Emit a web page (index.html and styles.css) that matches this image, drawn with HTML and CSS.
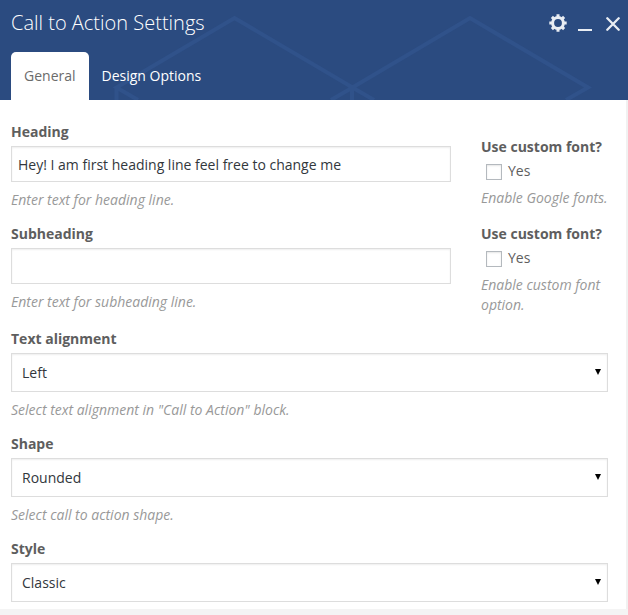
FILE: index.html
```html
<!DOCTYPE html>
<html lang="en">
<head>
<meta charset="utf-8">
<title>Call to Action Settings</title>
<link rel="stylesheet" href="styles.css">
</head>
<body>
<div class="panel">
  <header class="header">
    <svg class="pattern" width="628" height="100" viewBox="0 0 628 100" fill="none" stroke="#30528a" stroke-width="4">
      <path d="M138 100L116.500 87.500L234.500 18L352.500 87.500L470 18L588 87.500L566 100M116.500 87v13M352 87v13M331 100L352.500 87.500L374 100"/>
    </svg>
    <div class="titlebar">
      <h1 class="title">Call to Action Settings</h1>
      <div class="controls">
        <button class="control gear" aria-label="Settings">
          <svg width="18" height="18" viewBox="0 0 18 18" fill="none" stroke="#e9edf3">
            <circle cx="9" cy="9" r="5.400" stroke-width="3"/>
            <path stroke-width="3" d="M9 .3v3M9 14.700v3M.3 9h3M14.700 9h3M2.900 2.900l2 2M13.100 13.100l2 2M2.900 15.100l2-2M13.100 4.900l2-2"/>
          </svg>
        </button>
        <button class="control minimize" aria-label="Minimize"></button>
        <button class="control" aria-label="Close">
          <svg width="14" height="14" viewBox="0 0 14 14" fill="none" stroke="#e9edf3" stroke-width="2.300" stroke-linecap="round"><path d="M1.300 1.300l11.400 11.400M12.700 1.300L1.300 12.700"/></svg>
        </button>
      </div>
    </div>
    <nav class="tabs">
      <a class="tab active">General</a>
      <a class="tab">Design Options</a>
    </nav>
  </header>
  <main class="content">
    <div class="row">
      <div class="field">
        <label class="label" for="heading">Heading</label>
        <input class="input" id="heading" type="text" value="Hey! I am first heading line feel free to change me">
        <p class="hint">Enter text for heading line.</p>
      </div>
      <div class="field option offset">
        <span class="label">Use custom font?</span>
        <label class="check"><input class="box" type="checkbox">Yes</label>
        <p class="hint">Enable Google fonts.</p>
      </div>
    </div>
    <div class="row">
      <div class="field">
        <label class="label" for="subheading">Subheading</label>
        <input class="input" id="subheading" type="text">
        <p class="hint">Enter text for subheading line.</p>
      </div>
      <div class="field option">
        <span class="label">Use custom font?</span>
        <label class="check"><input class="box" type="checkbox">Yes</label>
        <p class="hint">Enable custom font option.</p>
      </div>
    </div>
    <div class="field">
      <span class="label">Text alignment</span>
      <div class="select">Left<i class="arrow"></i></div>
      <p class="hint">Select text alignment in "Call to Action" block.</p>
    </div>
    <div class="field">
      <span class="label">Shape</span>
      <div class="select">Rounded<i class="arrow"></i></div>
      <p class="hint">Select call to action shape.</p>
    </div>
    <div class="field">
      <span class="label">Style</span>
      <div class="select">Classic<i class="arrow"></i></div>
    </div>
  </main>
</div>
</body>
</html>
```
FILE: styles.css
```css
* { box-sizing: border-box; }
body {
  margin: 0;
  background: #f4f4f4;
  font: 14px/20px "Open Sans", sans-serif;
  color: #5e5e5e;
  overflow: hidden;
}
.header {
  position: relative;
  height: 100px;
  background: #2b4b80;
  color: #fff;
  display: flex;
  flex-direction: column;
  justify-content: space-between;
}
.pattern { position: absolute; top: 0; left: 0; }
.titlebar {
  position: relative;
  display: flex;
  justify-content: space-between;
  padding: 8px 8px 0 11px;
}
.title {
  margin: 0;
  font-size: 20px;
  line-height: 30px;
  font-weight: 300;
}
.controls {
  display: flex;
  align-items: flex-start;
  gap: 11px;
  height: 31px;
}
.control {
  display: flex;
  padding: 0;
  border: 0;
  background: none;
}
.control:last-child { margin: 9px 0 0 3px; }
.gear { margin-top: 6px; }
.minimize {
  width: 14px;
  height: 2px;
  margin-top: 21px;
  background: #e9edf3;
}
.tabs {
  position: relative;
  display: flex;
  padding-left: 11px;
}
.tab {
  height: 48px;
  padding: 0 12.500px;
  line-height: 48px;
  color: #fff;
}
.tab.active {
  width: 78px;
  padding: 0 13px;
  border-radius: 5px 5px 0 0;
  background: #fff;
  color: #6b6b6b;
}
.content {
  width: 626px;
  height: 509px;
  padding: 22px 18px 0 11px;
  background: #fff;
}
.panel { background: linear-gradient(#f1f1f1, #f1f1f1) right top / 2px 609px no-repeat; }
.row {
  display: grid;
  grid-template-columns: 440px 127px;
  column-gap: 30px;
}
.field { margin-bottom: 14px; }
.offset { padding-top: 15px; }
.label {
  display: block;
  margin-bottom: 4px;
  font-weight: 700;
}
.input, .select {
  display: block;
  width: 100%;
  border: 1px solid #ddd;
  background: #fff;
  box-shadow: inset 0 1px 2px rgba(0, 0, 0, .07);
  color: #32373c;
  font: inherit;
}
.input {
  height: 36px;
  padding: 0 6px;
}
.select {
  display: flex;
  align-items: center;
  justify-content: space-between;
  height: 39px;
  padding: 0 6px 0 10px;
}
.arrow {
  width: 6px;
  height: 6px;
  margin-top: -1px;
  background: #000;
  clip-path: polygon(0 0, 100% 0, 50% 100%);
}
.hint {
  margin: 8px 0 0;
  font-style: italic;
  color: #999;
}
.option .hint { margin-top: 7px; }
.check {
  display: flex;
  align-items: center;
  gap: 6px;
  padding-left: 5px;
}
.box {
  appearance: none;
  width: 16px;
  height: 16px;
  margin: 2px 0 0;
  border: 1px solid #b4b9be;
  background: #fff;
  box-shadow: inset 0 1px 2px rgba(0, 0, 0, .1);
}
```
